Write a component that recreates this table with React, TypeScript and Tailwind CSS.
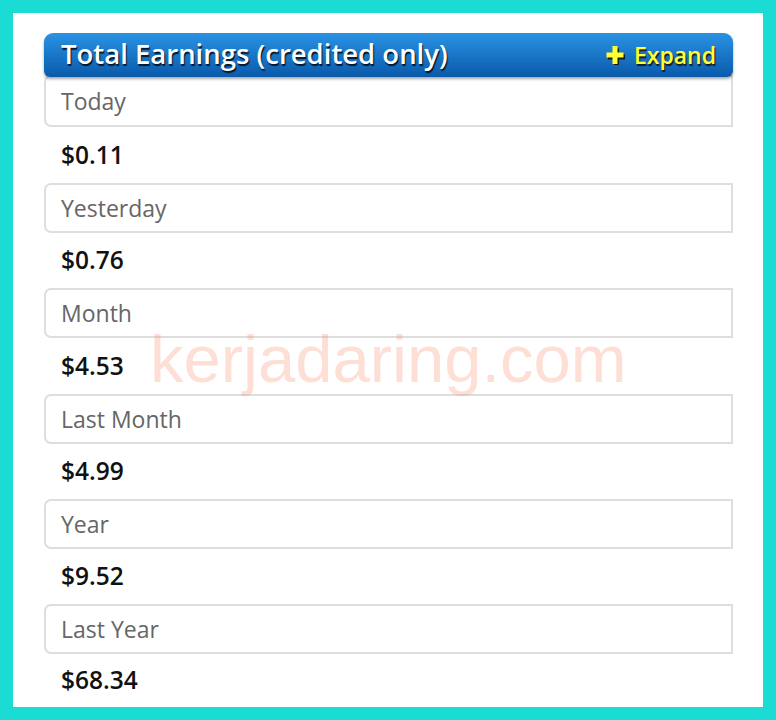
import React from "react";

const rows = [
  { label: "Today", value: "$0.11", gap: "h-[56px]" },
  { label: "Yesterday", value: "$0.76", gap: "h-[55px]" },
  { label: "Month", value: "$4.53", gap: "h-[56px]" },
  { label: "Last Month", value: "$4.99", gap: "h-[55px]" },
  { label: "Year", value: "$9.52", gap: "h-[55px]" },
  { label: "Last Year", value: "$68.34", gap: "h-[52px]" },
];

export default function App() {
  return (
    <div className="w-[776px] h-[720px] bg-[#1adcd4] p-[13px]" style={{ fontFamily: '"Open Sans", "Noto Sans", sans-serif' }}>
      <div className="relative w-[750px] h-[694px] bg-white pt-[20px] pl-[31px] pr-[30px]">
        <div className="relative z-10 flex items-center justify-between h-[44px] rounded-t-[9px] rounded-b-[6px] bg-gradient-to-b from-[#2a93e4] to-[#0a5aab] pl-[17px] pr-[17px] shadow-[0_2px_3px_rgba(0,0,0,0.35)]">
          <span className="text-white text-[27.5px] font-semibold leading-none -mt-[3px] [text-shadow:1px_2px_1px_#08162a]">
            Total Earnings (credited only)
          </span>
          <span className="flex items-center gap-[9px] text-[#ffff33] text-[23px] font-semibold leading-none [text-shadow:1px_2px_1px_#1a1a1a]">
            <svg width="20" height="20" viewBox="0 0 20 20">
              <path d="M8 2h5v6h6v5h-6v6H8v-6H2V8h6z" fill="#1a1a1a" transform="translate(1 1.5)" />
              <path d="M7.5 1h5v6.5H18.5v5h-6v6.5h-5v-6.5H1.5v-5h6z" fill="#ffff33" />
            </svg>
            Expand
          </span>
        </div>
        <div className="flex flex-col">
          {rows.map((r, i) => (
            <div key={r.label} className="flex flex-col">
              <div
                className={`flex items-center border-2 border-[#dedede] rounded-l-[7px] pl-[15px] text-[23px] text-[#666666] ${i === 0 ? "-mt-[2px] h-[52px]" : "h-[50px]"}`}
              >
                {r.label}
              </div>
              <div className={`flex items-center pl-[17px] text-[24.5px] font-semibold text-[#111111] ${r.gap}`}>
                {r.value}
              </div>
            </div>
          ))}
        </div>
        <div
          className="pointer-events-none absolute left-[137px] top-[312px] text-[67px] leading-none text-[rgba(247,140,105,0.28)]"
          style={{ fontFamily: '"Liberation Sans", Arial, sans-serif' }}
        >
          kerjadaring.com
        </div>
      </div>
    </div>
  );
}
